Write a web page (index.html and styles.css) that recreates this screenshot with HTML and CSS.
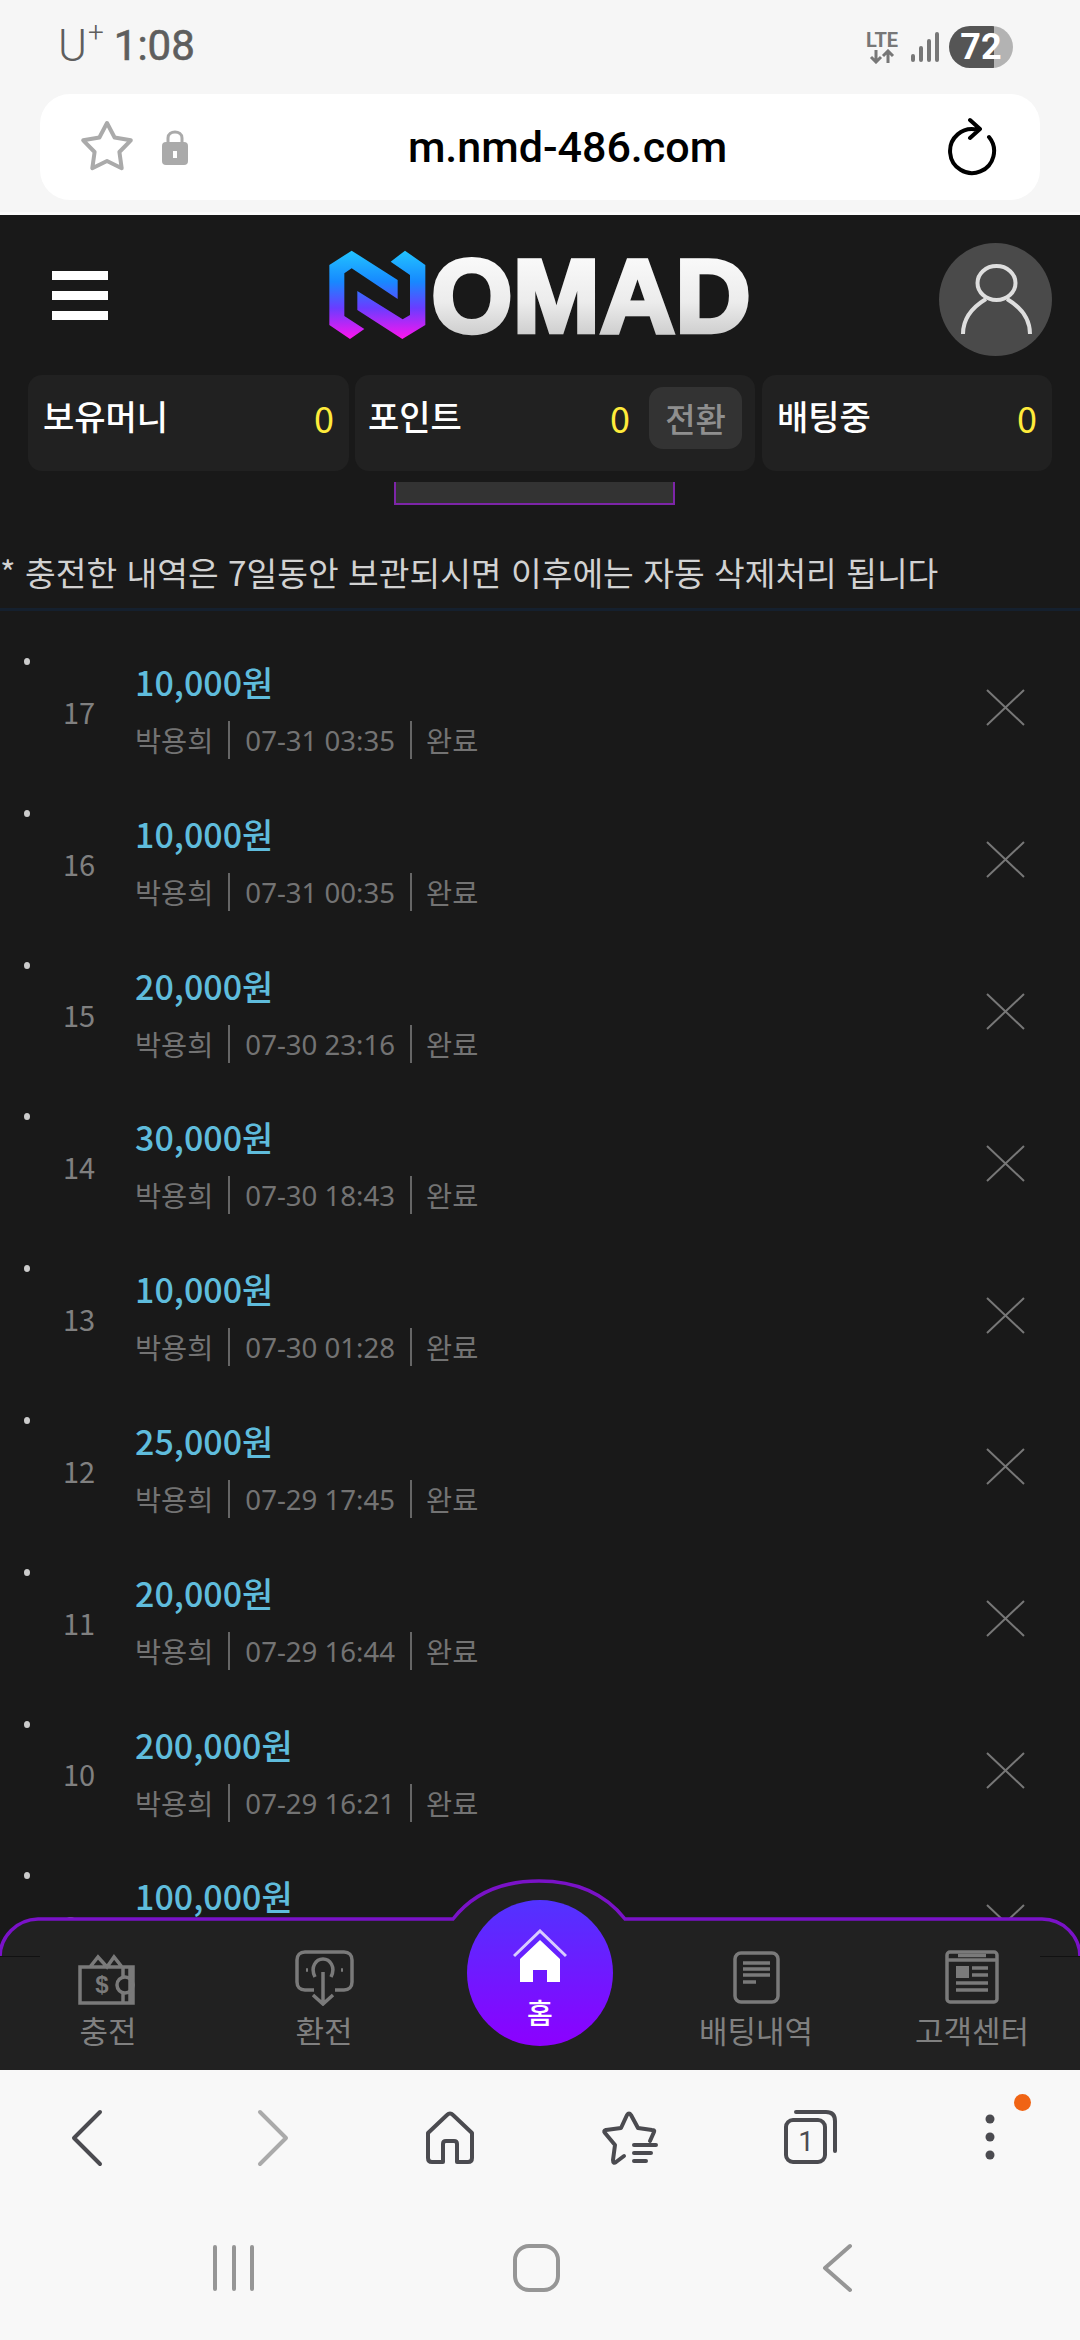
FILE: index.html
```html
<!DOCTYPE html>
<html lang="ko">

<head>
    <meta charset="UTF-8">
    <meta name="viewport" content="width=device-width, initial-scale=1.0">
    <title>NOMAD</title>
    <link rel="stylesheet" href="styles.css">
</head>

<body>
    <!-- Phone status bar -->
    <div class="status-bar">
        <div class="carrier"><span class="carrier-u">U</span><sup class="carrier-plus">+</sup><span class="clock">1:08</span></div>
        <div class="status-right">
            <div class="lte">
                <span class="lte-text">LTE</span>
                <svg width="26" height="15" viewBox="0 0 26 15" class="ic-lte">
                    <path d="M7 1V13M2 8L7 13L12 8M19 14V2M14 7L19 2L24 7" />
                </svg>
            </div>
            <svg width="28" height="30" viewBox="0 0 28 30" class="ic-signal">
                <path d="M2 24V28M10 16V28M18 9V28M26 2V28" />
            </svg>
            <div class="battery">72</div>
        </div>
    </div>

    <!-- Browser address bar -->
    <div class="address-wrap">
        <div class="address-bar">
            <svg class="ic-star" width="54" height="54" viewBox="0 0 54 54">
                <path d="M27 3L34.6 17.5L50.8 20.3L39.4 32L41.7 48.2L27 41L12.3 48.2L14.6 32L3.2 20.3L19.4 17.5Z" />
            </svg>
            <svg class="ic-lock" width="26" height="36" viewBox="0 0 26 36">
                <path class="lock-arc" d="M6 16V9C6 1 20 1 20 9V16" />
                <rect class="lock-body" x="0" y="13" width="26" height="23" rx="4" />
                <path class="lock-key" d="M11 22H15V29H11Z" />
            </svg>
            <div class="url">m.nmd-486.com</div>
            <svg class="ic-reload" width="50" height="60" viewBox="0 0 50 60">
                <path d="M42 20A22 22 0 1 1 30 12.6M23 3L33 12L23 21" />
            </svg>
        </div>
    </div>

    <div class="main">
        <!-- Header -->
        <div class="header">
            <div class="hamburger"><span></span><span></span><span></span></div>
            <svg class="logo" width="480" height="130" viewBox="0 0 1440 390">
                <defs>
                    <linearGradient id="logoMark" x1="0" y1="0" x2="0" y2="1">
                        <stop offset="0" stop-color="#22c4ff" />
                        <stop offset="0.35" stop-color="#1789ff" />
                        <stop offset="0.65" stop-color="#6a3cff" />
                        <stop offset="1" stop-color="#ff14ee" />
                    </linearGradient>
                    <linearGradient id="logoText" x1="0" y1="0" x2="0" y2="1">
                        <stop offset="0" stop-color="#ffffff" />
                        <stop offset="0.55" stop-color="#ececec" />
                        <stop offset="1" stop-color="#bdbdbd" />
                    </linearGradient>
                </defs>
                <g fill="url(#logoMark)">
                    <path d="M155 62L293 150V207L155 115L133 130V258L193 297L150 327L88 285V105Z" />
                    <path d="M315 62L376 105V285L307 327L172 240V183L308 268L330 255V135L272 95Z" />
                </g>
                <text class="logo-text" x="394" y="305" textLength="958" lengthAdjust="spacingAndGlyphs" fill="url(#logoText)" stroke="url(#logoText)">OMAD</text>
            </svg>
            <div class="avatar">
                <svg width="80" height="80" viewBox="0 0 80 80">
                    <ellipse cx="40.5" cy="23" rx="19" ry="17" />
                    <path d="M7 74C7 55 20 45 30 39M74 74C74 55 61 45 51 39" />
                </svg>
            </div>
        </div>

        <!-- Balance cards -->
        <div class="stats">
            <div class="stat stat-money">
                <span class="stat-label">보유머니</span>
                <span class="stat-value">0</span>
            </div>
            <div class="stat stat-point">
                <span class="stat-label">포인트</span>
                <span class="stat-value">0</span>
                <button class="swap-btn">전환</button>
            </div>
            <div class="stat stat-bet">
                <span class="stat-label">배팅중</span>
                <span class="stat-value">0</span>
            </div>
        </div>

        <div class="tab-stub"></div>

        <div class="notice">* 충전한 내역은 7일동안 보관되시면 이후에는 자동 삭제처리 됩니다</div>

        <!-- History list -->
        <div class="list">
            <div class="row">
                <span class="dot"></span><span class="num">17</span>
                <div class="row-body">
                    <div class="amount">10,000원</div>
                    <div class="meta"><span class="name">박용희</span><span class="date">07-31 03:35</span><span class="state">완료</span></div>
                </div>
                <svg class="ic-x" width="39" height="37" viewBox="0 0 39 37"><path d="M1 1L38 36M38 1L1 36" /></svg>
            </div>
            <div class="row">
                <span class="dot"></span><span class="num">16</span>
                <div class="row-body">
                    <div class="amount">10,000원</div>
                    <div class="meta"><span class="name">박용희</span><span class="date">07-31 00:35</span><span class="state">완료</span></div>
                </div>
                <svg class="ic-x" width="39" height="37" viewBox="0 0 39 37"><path d="M1 1L38 36M38 1L1 36" /></svg>
            </div>
            <div class="row">
                <span class="dot"></span><span class="num">15</span>
                <div class="row-body">
                    <div class="amount">20,000원</div>
                    <div class="meta"><span class="name">박용희</span><span class="date">07-30 23:16</span><span class="state">완료</span></div>
                </div>
                <svg class="ic-x" width="39" height="37" viewBox="0 0 39 37"><path d="M1 1L38 36M38 1L1 36" /></svg>
            </div>
            <div class="row">
                <span class="dot"></span><span class="num">14</span>
                <div class="row-body">
                    <div class="amount">30,000원</div>
                    <div class="meta"><span class="name">박용희</span><span class="date">07-30 18:43</span><span class="state">완료</span></div>
                </div>
                <svg class="ic-x" width="39" height="37" viewBox="0 0 39 37"><path d="M1 1L38 36M38 1L1 36" /></svg>
            </div>
            <div class="row">
                <span class="dot"></span><span class="num">13</span>
                <div class="row-body">
                    <div class="amount">10,000원</div>
                    <div class="meta"><span class="name">박용희</span><span class="date">07-30 01:28</span><span class="state">완료</span></div>
                </div>
                <svg class="ic-x" width="39" height="37" viewBox="0 0 39 37"><path d="M1 1L38 36M38 1L1 36" /></svg>
            </div>
            <div class="row">
                <span class="dot"></span><span class="num">12</span>
                <div class="row-body">
                    <div class="amount">25,000원</div>
                    <div class="meta"><span class="name">박용희</span><span class="date">07-29 17:45</span><span class="state">완료</span></div>
                </div>
                <svg class="ic-x" width="39" height="37" viewBox="0 0 39 37"><path d="M1 1L38 36M38 1L1 36" /></svg>
            </div>
            <div class="row">
                <span class="dot"></span><span class="num">11</span>
                <div class="row-body">
                    <div class="amount">20,000원</div>
                    <div class="meta"><span class="name">박용희</span><span class="date">07-29 16:44</span><span class="state">완료</span></div>
                </div>
                <svg class="ic-x" width="39" height="37" viewBox="0 0 39 37"><path d="M1 1L38 36M38 1L1 36" /></svg>
            </div>
            <div class="row">
                <span class="dot"></span><span class="num">10</span>
                <div class="row-body">
                    <div class="amount">200,000원</div>
                    <div class="meta"><span class="name">박용희</span><span class="date">07-29 16:21</span><span class="state">완료</span></div>
                </div>
                <svg class="ic-x" width="39" height="37" viewBox="0 0 39 37"><path d="M1 1L38 36M38 1L1 36" /></svg>
            </div>
            <div class="row">
                <span class="dot"></span><span class="num">9</span>
                <div class="row-body">
                    <div class="amount">100,000원</div>
                    <div class="meta"><span class="name">박용희</span><span class="date">07-29 16:00</span><span class="state">완료</span></div>
                </div>
                <svg class="ic-x" width="39" height="37" viewBox="0 0 39 37"><path d="M1 1L38 36M38 1L1 36" /></svg>
            </div>
        </div>

        <!-- Bottom menu, lies over the list -->
        <div class="bottom-nav">
            <svg class="nav-shape" width="1080" height="191" viewBox="0 0 1080 191">
                <path class="nav-fill" d="M0 78A39 38 0 0 1 38 40H453C475 12 505 2 539 2S603 12 625 40H1042A38 38 0 0 1 1080 78V191H0Z" />
                <path class="nav-line" d="M0 78A39 38 0 0 1 38 40H453C475 12 505 2 539 2S603 12 625 40H1042A38 38 0 0 1 1080 78" />
                <path class="nav-hair" d="M0 77.5H40M1040 77.5H1080" />
            </svg>
            <div class="nav-items">
                <div class="nav-item">
                    <svg class="nav-icon" width="60" height="56" viewBox="0 0 60 56">
                        <path d="M12 17L20 7L29 17L36 7L44 17M2 17H52V53H2ZM45 17V27M45 43V53M52 17H55V53H52" />
                        <circle cx="47" cy="35" r="8" />
                        <text class="dollar" x="24" y="43" text-anchor="middle">$</text>
                    </svg>
                    <span class="nav-label">충전</span>
                </div>
                <div class="nav-item">
                    <svg class="nav-icon" width="60" height="56" viewBox="0 0 60 56">
                        <path d="M20 40H11C6 40 3 37 3 32V10C3 5 6 2 11 2H50C55 2 58 5 58 10V32C58 37 55 40 50 40H41M21 27C16 17 22 9 29 9C36 9 42 17 37 27M29 22V54M19 45L29 54L39 45M12 20H14M47 20H49" />
                    </svg>
                    <span class="nav-label">환전</span>
                </div>
                <div class="nav-item nav-home">
                    <div class="home-btn">
                        <svg class="home-icon" width="54" height="54" viewBox="0 0 54 54">
                            <path class="home-roof" d="M1 27L27 2L53 27" />
                            <path class="home-body" fill-rule="evenodd" d="M27 11L47 30V53H34V41H20V53H7V30Z" />
                        </svg>
                        <span class="home-label">홈</span>
                    </div>
                </div>
                <div class="nav-item">
                    <svg class="nav-icon" width="60" height="56" viewBox="0 0 60 56">
                        <rect x="9" y="3" width="43" height="49" rx="6" />
                        <path d="M17 13H44M17 19H44M17 25H44M17 32H30" />
                    </svg>
                    <span class="nav-label">배팅내역</span>
                </div>
                <div class="nav-item">
                    <svg class="nav-icon" width="60" height="56" viewBox="0 0 60 56">
                        <rect x="5" y="2" width="50" height="50" rx="3" />
                        <path d="M5 10H55M16 5.5H44M30 18H46M30 25H46M14 33H46M14 40H46" />
                        <rect class="news-block" x="14" y="16" width="13" height="12" />
                    </svg>
                    <span class="nav-label">고객센터</span>
                </div>
            </div>
        </div>
    </div>

    <!-- Browser toolbar -->
    <div class="toolbar">
        <svg class="tb-icon" width="60" height="60" viewBox="0 0 60 60"><path d="M40 4L14 30L40 56" /></svg>
        <svg class="tb-icon tb-off" width="60" height="60" viewBox="0 0 60 60"><path d="M20 4L46 30L20 56" /></svg>
        <svg class="tb-icon" width="60" height="60" viewBox="0 0 60 60"><path d="M23 54H12Q8 54 8 50V25L27 7Q30 4 33 7L52 25V50Q52 54 48 54H37V36Q37 33 34 33H26Q23 33 23 36Z" /></svg>
        <svg class="tb-icon" width="60" height="60" viewBox="0 0 60 60"><path d="M50 33L54 24Q55 22 52 22L38 20L31 7Q29 4 27 7L21 20L6 22Q3 23 5 25L15 37L13 52Q13 56 16 54L24 48M34 37H56M34 45H51M34 53H46" /></svg>
        <svg class="tb-icon" width="60" height="60" viewBox="0 0 60 60">
            <rect x="6" y="12" width="39" height="42" rx="7" />
            <path d="M16 4H46Q55 4 55 13V43" />
            <text class="tab-count" x="26" y="43" text-anchor="middle">1</text>
        </svg>
        <div class="tb-menu">
            <svg class="tb-dots" width="60" height="60" viewBox="0 0 60 60">
                <circle cx="30" cy="11" r="4.5" />
                <circle cx="30" cy="29" r="4.5" />
                <circle cx="30" cy="47" r="4.5" />
            </svg>
            <span class="notify"></span>
        </div>
    </div>

    <!-- Phone navigation -->
    <div class="sys-nav">
        <svg class="sys-icon" width="60" height="60" viewBox="0 0 60 60"><path d="M11 9V51M30 9V51M48 9V51" /></svg>
        <svg class="sys-icon" width="60" height="60" viewBox="0 0 60 60"><rect x="10" y="8" width="43" height="44" rx="14" /></svg>
        <svg class="sys-icon" width="60" height="60" viewBox="0 0 60 60"><path d="M44 8L19 30L44 52" /></svg>
    </div>
</body>

</html>
```

FILE: styles.css
```css
html {
    height: 2340px;
    overflow: hidden;
}

body {
    margin: 0;
    width: 1080px;
    height: 2340px;
    overflow: hidden;
    display: flex;
    flex-direction: column;
    background-color: #f7f7f7;
    font-family: "Noto Sans CJK KR", "Noto Sans", sans-serif;
}

svg {
    display: block;
    flex-shrink: 0;
    fill: none;
}

/* Phone status bar */
.status-bar {
    height: 94px;
    padding: 0 67px 0 58px;
    display: flex;
    justify-content: space-between;
    align-items: center;
    background-color: #f6f6f6;
    color: #5e5e5e;
}

.carrier {
    display: flex;
    align-items: flex-start;
    margin-bottom: 3px;
    font-family: Roboto, sans-serif;
    font-size: 42px;
    line-height: 46px;
}

.carrier-u {
    font-weight: 300;
    font-size: 44px;
}

.carrier-plus {
    font-size: 28px;
    line-height: 26px;
    font-weight: 300;
    margin: -3px 10px 0 1px;
}

.clock {
    font-weight: 400;
    -webkit-text-stroke: 0.6px #5e5e5e;
}

.status-right {
    display: flex;
    align-items: center;
}

.lte {
    width: 34px;
    margin-right: 12px;
    display: flex;
    flex-direction: column;
    align-items: center;
}

.lte-text {
    font-family: Roboto, sans-serif;
    font-size: 20px;
    line-height: 18px;
    font-weight: 700;
    color: #777;
}

.ic-lte path {
    stroke: #777;
    stroke-width: 3;
}

.ic-signal {
    margin-right: 10px;
}

.ic-signal path {
    stroke: #777;
    stroke-width: 4;
    stroke-linecap: round;
}

.battery {
    width: 64px;
    height: 42px;
    border-radius: 21px;
    background: linear-gradient(90deg, #555 70%, #b3b3b3 70%);
    color: #fff;
    font-family: Roboto, sans-serif;
    font-size: 36px;
    line-height: 42px;
    font-weight: 700;
    text-align: center;
}

/* Address bar */
.address-wrap {
    height: 121px;
    padding: 0 40px 12px;
    box-sizing: border-box;
    background-color: #f6f6f6;
    border-bottom: 3px solid #fbfbfb;
}

.address-bar {
    height: 106px;
    padding: 0 43px 0 40px;
    display: flex;
    align-items: center;
    border-radius: 30px;
    background-color: #fff;
}

.ic-star path {
    stroke: #aaa;
    stroke-width: 4;
    stroke-linejoin: round;
}

.ic-lock {
    margin-left: 28px;
}

.lock-arc {
    stroke: #aaa;
    stroke-width: 3;
}

.lock-body {
    fill: #aaa;
}

.lock-key {
    fill: #fff;
}

.url {
    flex: 1;
    text-align: center;
    font-family: Roboto, sans-serif;
    font-size: 43px;
    font-weight: 500;
    color: #000;
}

.ic-reload path {
    stroke: #000;
    stroke-width: 4;
    stroke-linecap: round;
    stroke-linejoin: round;
}

/* Main page */
.main {
    position: relative;
    height: 1855px;
    overflow: hidden;
    background-color: #191919;
    flex-shrink: 0;
}

.header {
    height: 160px;
    display: grid;
    grid-template-columns: 300px 480px 300px;
    align-items: center;
}

.hamburger {
    margin-left: 52px;
    width: 56px;
    display: flex;
    flex-direction: column;
    gap: 11px;
}

.hamburger span {
    height: 9px;
    background-color: #fff;
}

.avatar {
    justify-self: end;
    margin: 9px 28px 0 0;
    width: 113px;
    height: 113px;
    border-radius: 50%;
    background-color: #4a4a4a;
    display: flex;
    align-items: center;
    justify-content: center;
}

.avatar svg {
    stroke: #dedede;
    stroke-width: 4;
}

.logo-text {
    font-family: "Liberation Sans", sans-serif;
    font-size: 309px;
    font-weight: 700;
    stroke-width: 13;
    stroke-linejoin: miter;
}

/* Balance cards */
.stats {
    padding: 0 28px;
    display: flex;
    gap: 6px;
}

.stat {
    height: 96px;
    box-sizing: border-box;
    padding: 12px 15px 22px 15px;
    display: flex;
    align-items: center;
    justify-content: space-between;
    border-radius: 14px;
    background-color: #212121;
}

.stat-money {
    width: 321px;
}

.stat-point {
    width: 400px;
    padding-left: 13px;
    padding-right: 13px;
}

.stat-bet {
    width: 290px;
    margin-left: 1px;
}

.stat-label {
    margin-bottom: 6px;
    font-size: 34px;
    font-weight: 500;
    color: #fff;
}

.stat-value {
    margin-bottom: 2px;
    font-size: 36px;
    color: #ffeb3b;
}

.stat-point .stat-value {
    margin-left: auto;
    margin-right: 19px;
}

.swap-btn {
    width: 93px;
    height: 62px;
    padding: 0;
    border: none;
    border-radius: 14px;
    background-color: #333;
    color: #8f8f8f;
    font-family: inherit;
    font-size: 33px;
    font-weight: 500;
}

.tab-stub {
    width: 277px;
    height: 21px;
    margin: 11px 0 0 394px;
    background-color: #333;
    border: 2px solid #7d25a8;
    border-top: none;
}

.notice {
    height: 106px;
    box-sizing: border-box;
    border-bottom: 3px solid #15202e;
    padding-top: 35px;
    font-size: 33.4px;
    line-height: 64px;
    color: #d2d2d2;
    white-space: nowrap;
}

/* History list */
.list {
    padding-top: 24px;
}

.row {
    height: 151.8px;
    padding-left: 24px;
    display: flex;
    align-items: center;
}

.dot {
    align-self: flex-start;
    width: 6px;
    height: 7px;
    margin-top: 23px;
    border-radius: 50%;
    background-color: #ccc;
}

.num {
    width: 72px;
    margin-left: 33px;
    font-size: 29px;
    color: #808080;
}

.row-body {
    align-self: flex-start;
    padding-top: 23px;
}

.amount {
    height: 48px;
    margin-bottom: 15px;
    font-size: 34px;
    line-height: 48px;
    font-weight: 500;
    color: #5fbcdc;
}

.meta {
    display: flex;
    height: 38px;
    font-size: 28.4px;
    line-height: 38px;
    color: #737373;
}

.name {
    padding-right: 15px;
    border-right: 2px solid #666;
}

.date {
    padding: 0 15px;
    border-right: 2px solid #666;
    font-family: "Noto Sans", "Noto Sans CJK KR", sans-serif;
    font-size: 27.6px;
}

.state {
    padding-left: 14px;
}

.ic-x {
    margin: 0 55px 6px auto;
}

.ic-x path {
    stroke: #777;
    stroke-width: 2;
}

/* Bottom menu */
.bottom-nav {
    position: absolute;
    left: 0;
    right: 0;
    bottom: 0;
    height: 191px;
}

.nav-shape {
    position: absolute;
    left: 0;
    top: 0;
}

.nav-fill {
    fill: #212121;
}

.nav-line {
    stroke: #7a12c8;
    stroke-width: 3.5;
}

.nav-hair {
    stroke: #111;
    stroke-width: 1;
}

.nav-items {
    position: relative;
    height: 100%;
    display: grid;
    grid-template-columns: repeat(5, 216px);
}

.nav-item {
    padding-bottom: 19px;
    display: flex;
    flex-direction: column;
    align-items: center;
    justify-content: flex-end;
}

.nav-icon {
    margin-bottom: 3px;
    stroke: #7a7a7a;
    stroke-width: 3.5;
}

.dollar {
    font-family: "Liberation Sans", sans-serif;
    font-size: 24px;
    font-weight: 700;
    fill: #7a7a7a;
    stroke: none;
}

.news-block {
    fill: #7a7a7a;
    stroke: none;
}

.nav-label {
    font-size: 31px;
    line-height: 42px;
    color: #808080;
}

.nav-home {
    padding: 21px 0 0;
    justify-content: flex-start;
}

.home-btn {
    width: 146px;
    height: 146px;
    border-radius: 50%;
    background: linear-gradient(180deg, #5233ff, #8c00ff);
    display: flex;
    flex-direction: column;
    align-items: center;
    padding-top: 29px;
    box-sizing: border-box;
}

.home-roof {
    stroke: #d9ccff;
    stroke-width: 3;
}

.home-body {
    fill: #fff;
}

.home-label {
    margin-top: 8px;
    font-size: 28px;
    line-height: 42px;
    font-weight: 500;
    color: #fff;
}

/* Browser toolbar */
.toolbar {
    height: 136px;
    display: grid;
    grid-template-columns: repeat(6, 180px);
    justify-items: center;
    align-items: center;
    background-color: #f8f8f8;
}

.tb-icon {
    stroke: #4b4b50;
    stroke-width: 4;
    stroke-linecap: round;
    stroke-linejoin: round;
}

.tb-off {
    stroke: #aaa;
}

.tab-count {
    font-family: Roboto, sans-serif;
    font-size: 28px;
    fill: #4b4b50;
    stroke: none;
}

.tb-menu {
    position: relative;
}

.tb-dots {
    fill: #4b4b50;
}

.notify {
    position: absolute;
    left: 54px;
    top: -14px;
    width: 17px;
    height: 17px;
    border-radius: 50%;
    background-color: #f06414;
}

/* Phone navigation */
.sys-nav {
    height: 134px;
    box-sizing: border-box;
    padding: 32px 0 0 204px;
    display: flex;
    gap: 241px;
    background-color: #f8f8f8;
}

.sys-icon {
    stroke: #969696;
    stroke-width: 4;
    stroke-linecap: round;
    stroke-linejoin: round;
}
```
